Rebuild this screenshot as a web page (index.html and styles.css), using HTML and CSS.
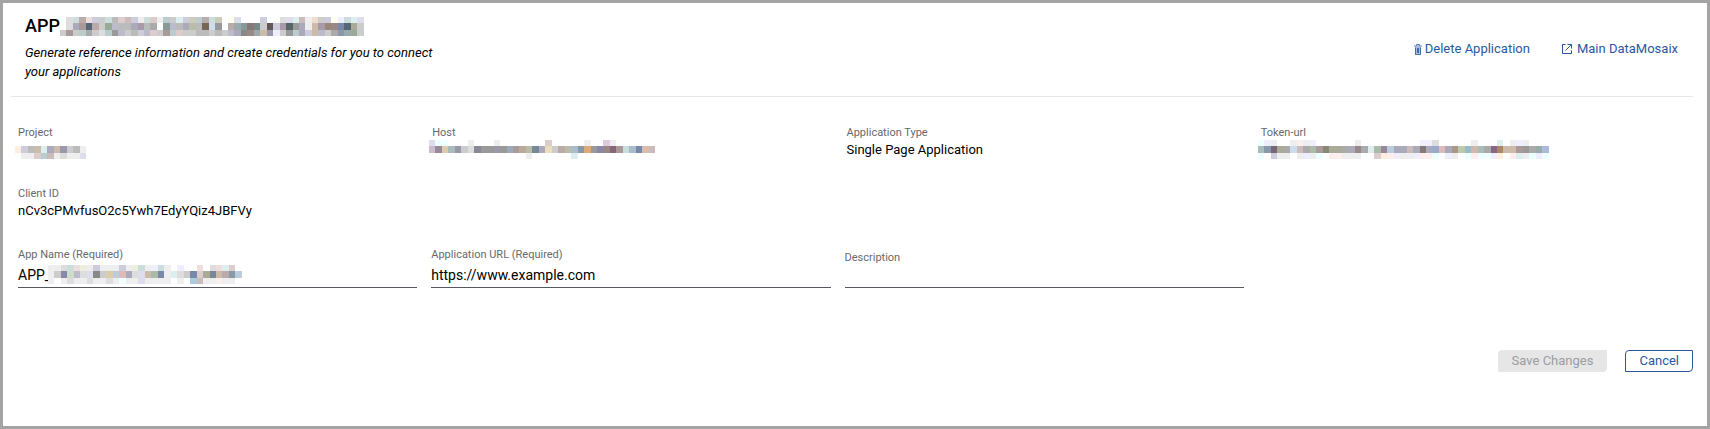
FILE: index.html
```
<!DOCTYPE html>
<html lang="en">

<head>
    <meta charset="UTF-8">
    <meta name="viewport" content="width=device-width, initial-scale=1.0">
    <title>Application</title>
    <link rel="stylesheet" href="styles.css">
</head>

<body>
    <div class="wrapper">
        <header class="header">
            <div class="intro">
                <h1>APP<svg class="mosaic" data-name="title"></svg></h1>
                <p>Generate reference information and create credentials for you to connect your applications</p>
            </div>
            <nav class="links">
                <a href="#">
                    <svg width="8" height="11" viewBox="0 0 8 11">
                        <path d="M1 3h6v7.500H1z" fill="currentColor" opacity=".4" />
                        <path d="M2.500 1.500V.5h3v1M0 2h8M1.500 3.500v7h5v-7M3.500 4v5M4.500 4v5" fill="none" stroke="currentColor" stroke-opacity=".8" />
                    </svg>
                    Delete Application
                </a>
                <a href="#">
                    <svg class="open" width="10" height="10" viewBox="0 0 10 10">
                        <path d="M3.500 .5h-3v9h9v-3M5.500 .5h4v4M9.500 .5L3.500 6.500" fill="none" stroke="currentColor" />
                    </svg>
                    Main DataMosaix
                </a>
            </nav>
        </header>
        <form>
            <dl class="grid">
                <div>
                    <dt>Project</dt>
                    <dd><svg class="mosaic" data-name="project"></svg></dd>
                </div>
                <div>
                    <dt>Host</dt>
                    <dd><svg class="mosaic" data-name="host"></svg></dd>
                </div>
                <div>
                    <dt>Application Type</dt>
                    <dd>Single Page Application</dd>
                </div>
                <div>
                    <dt>Token-url</dt>
                    <dd><svg class="mosaic" data-name="token"></svg></dd>
                </div>
                <div>
                    <dt>Client ID</dt>
                    <dd>nCv3cPMvfusO2c5Ywh7EdyYQiz4JBFVy</dd>
                </div>
            </dl>
            <div class="grid fields">
                <div class="field">
                    <label for="name">App Name (Required)</label>
                    <input type="text" id="name" value="APP_">
                    <svg class="mosaic" data-name="name"></svg>
                </div>
                <div class="field">
                    <label for="url">Application URL (Required)</label>
                    <input type="text" id="url" value="https://www.example.com">
                </div>
                <div class="field empty">
                    <label for="description">Description</label>
                    <input type="text" id="description">
                </div>
            </div>
            <div class="buttons">
                <button type="submit" disabled>Save Changes</button>
                <button type="button" class="cancel">Cancel</button>
            </div>
        </form>
    </div>
    <script src="mosaic.js"></script>
</body>

</html>
```
FILE: styles.css
```
* {
    box-sizing: border-box;
    margin: 0;
    padding: 0;
}

body {
    font-family: Roboto, "Liberation Sans", sans-serif;
    font-size: 13px;
    color: #000;
    background: #fff;
}

.wrapper {
    min-height: 100vh;
    border: 3px solid #a4a4a4;
}

.header {
    display: flex;
    justify-content: space-between;
    align-items: center;
    margin: 0 14px 0 8px;
    padding: 12px 15px 15px 14px;
    border-bottom: 1px solid #e6e8eb;
}

.intro {
    width: 420px;
}

h1 {
    display: flex;
    align-items: center;
    height: 22px;
    margin-bottom: 6px;
    font-size: 18px;
    font-weight: 500;
    line-height: 22px;
}

.intro p {
    font-style: italic;
    line-height: 19px;
}

.links {
    display: flex;
    gap: 32px;
    padding-top: 2px;
}

.links a {
    display: flex;
    align-items: center;
    gap: 3px;
    color: #2a589f;
    line-height: 18px;
    text-decoration: none;
}

.links .open {
    margin-right: 2px;
}

form {
    padding: 29px 32px 0 15px;
}

.grid {
    display: grid;
    grid-template-columns: repeat(4, 1fr);
    margin-bottom: 27px;
    row-gap: 27px;
}

/* the form columns are a little narrower than the read-only ones */
.fields {
    margin-right: 4px;
}

dt,
label {
    display: block;
    font-size: 11px;
    line-height: 14px;
    color: #67696d;
}

dd {
    height: 20px;
    line-height: 20px;
}

/* redacted values */
.mosaic {
    display: block;
    height: 19px;
    shape-rendering: crispEdges;
}

dd .mosaic {
    margin-left: -3px;
}

.field {
    position: relative;
    margin-right: 14px;
}

.field input {
    display: block;
    width: 100%;
    height: 26px;
    border: 0;
    border-bottom: 1px solid #55585e;
    outline: 0;
    background: none;
    font: 14px Roboto, "Liberation Sans", sans-serif;
    color: #000;
}

.field .mosaic {
    position: absolute;
    left: 30px;
    top: 17px;
}

.empty label {
    height: 14px;
    line-height: 20px;
}

.buttons {
    display: flex;
    justify-content: flex-end;
    gap: 18px;
    margin: 62px -18px 0 0;
}

button {
    height: 22px;
    padding: 0 13px 1px;
    border: 1px solid #e6e6e6;
    border-radius: 4px 0;
    background: #e6e6e6;
    color: #9b9da0;
    font: 13px Roboto, "Liberation Sans", sans-serif;
}

.cancel {
    border-color: #2a589f;
    background: #fff;
    color: #2a589f;
}
```
FILE: mosaic.js
```
// one string per row, one colour per cell, "-" leaves the cell empty
var mosaics = {
    title: [
        '- ddd cdd baa edd ccd ccc cdd bbb dcc cbb ccd eee cdd dcc eee bcc ccc dee ccd ccb bcc baa cdd ccb - ffe dde - - - ccd - - ddd dde dee cbb eee edc ccc ccd ffe eef cdd dee dde',
        '- ddd aab a99 567 baa ccc 9a9 bbc bbb bbb aab a9a bbb aaa fff 899 bbc bbb aab bba bbb 765 cde 999 fff baa 9aa 899 877 788 ccc 655 ccd a9a 566 999 aab eee cba a9a 987 988 78a 567 aa9 ccc',
        'ccc a99 ccc bcc aaa ccc ddd bcc 999 bbc ccc bbb ccd bbc dcc ccc a99 bcc dcc ccc ccc bbb bbb ccc bbb ccc bbc aab 888 988 9aa cba 99a eef ccc 999 bcc aab ccd cba bbc ccc aaa 89a 9aa 9a9 ccc'
    ],
    project: [
        '- - - - - - fff - fff - -',
        'fed ccd bbb cba dee aab cba 99a ccc bbb eee',
        'fff eee eee dcc bcc cbb eee ddd eee eee dde'
    ],
    host: [
        'dde eff eff - - fff eee - - - eee - - - - - - - dcc - - - - - eee - - dcd eee',
        'cbc 989 dca abb 99a ccc ddd 889 999 999 99a 999 9ab a99 ba9 bba 789 aab edb ccc baa bba abc 89a da7 999 88a 988 867 a99 cdd abc 78a dba cbb',
        '- - fff - - fff fff - - - - - - - - eee - - - - - - dee'
    ],
    token: [
        'eff eef eee - - eee fee eee eef - - - - - - eee - - - - - - - - - eef eef ddd - - - - - eee - - - dee - eee eef eee',
        'abb 89a 767 aa9 aaa cde cbb aaa aba a99 887 aa9 aa9 aaa aab 988 aaa dee aba 989 bcd aab aab cbb aab 877 aab 9ac dbb aab a98 bca 9bc cba abb aaa 868 a86 cba cba a99 999 aaa 9aa abd',
        'eff fff ccd eee eee fff eee eef eee eff fff fee fee eee eee eee fff fff dcc fed fee eef eee eee eef fee fee eff fff eef eee fff eff fee eff eff eef fed fff fee dee eee eff eef eff'
    ],
    name: [
        'eee eee ddd cdd edd eed eee ccd eee eee eee ccd eee eed cdd eee eef cdd eee fff eef - - edd - ddd edd dee dcc',
        'eee ccc 88a cdc bbc ddd dde 888 ccc dca bcd dbb aab ddd dde cba aba 78a eee dee ddd ccc 78a dcc aa9 789 cba baa 89a bcd',
        'eee fff eee ddd eee eee ddd eee eee ddd eee eff eee eee dde eee eee eee eee fff eee fff acd cbb eee eee fee eee eee'
    ]
};

var CELL = 6.46;
var TOPS = [0, 6, 13, 19];
var list = document.getElementsByClassName('mosaic');

for (var i = 0; i < list.length; i++) {
    var rows = mosaics[list[i].getAttribute('data-name')];
    var html = '';
    for (var r = 0; r < rows.length; r++) {
        var cells = rows[r].split(' ');
        for (var c = 0; c < cells.length; c++) {
            if (cells[c] == '-') continue;
            var x = Math.round(c * CELL);
            html += '<rect x="' + x + '" y="' + TOPS[r] + '" width="' + (Math.round((c + 1) * CELL) - x) +
                '" height="' + (TOPS[r + 1] - TOPS[r]) + '" fill="#' + cells[c] + '"/>';
        }
    }
    list[i].innerHTML = html;
    list[i].setAttribute('width', Math.ceil(rows[1].split(' ').length * CELL));
}
```
